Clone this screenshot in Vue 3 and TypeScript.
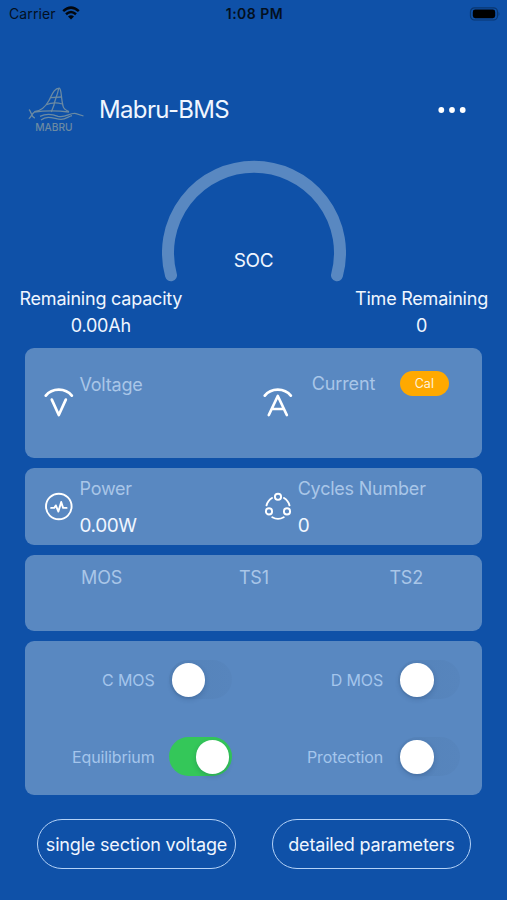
<script setup lang="ts">
import { ref } from 'vue'

interface Toggle {
  label: string
  on: boolean
}

const temperatures: string[] = ['MOS', 'TS1', 'TS2']
const toggles = ref<Toggle[]>([
  { label: 'C MOS', on: false },
  { label: 'D MOS', on: false },
  { label: 'Equilibrium', on: true },
  { label: 'Protection', on: false },
])
</script>

<template>
  <main class="screen">
    <div class="status">
      <div class="carrier">
        <span>Carrier</span>
        <svg class="wifi" width="18" height="14" viewBox="0 0 18 14">
          <path d="M1.2 5.1 Q9 -1.8 16.8 5.1" />
          <path d="M4 8.2 Q9 3.8 14 8.2" />
          <path class="fill" d="M6 10.5 Q9 7.8 12 10.5 L9 13.6 Z" />
        </svg>
      </div>
      <span class="clock">1:08 PM</span>
      <svg class="battery" width="31" height="14" viewBox="0 0 31 14">
        <rect class="shell" x="1.5" y="0.8" width="27" height="12.2" rx="4" />
        <rect x="3.8" y="2.6" width="22.4" height="8.6" rx="2.4" />
        <path class="cap" d="M29.6 4.8 Q31.2 6.9 29.6 9 Z" />
      </svg>
    </div>

    <header class="header">
      <svg class="logo" width="58" height="46" viewBox="0 0 58 46">
        <g class="lines">
          <path d="M6.3 24.7 C14 24 18 19 21 13.5 C24 8 26 1.2 31.3 1.2 C33.6 2 32.8 10 35 19 C35.6 22.4 38 23.4 41 24.6" />
          <path d="M30.7 1.5 C29.5 8 26.5 14 26 18 L23.3 25" />
          <path d="M23 10.6 L33.2 10" />
          <path d="M18.3 17.6 Q26 14.6 34.4 17" />
          <path d="M6.3 25 Q23 22.6 41 25" />
          <path d="M1 22.5 C3.5 24.5 2.6 29 6.8 31.2 M0.8 31.8 C3 30.5 3.5 27 6.5 25" />
          <path d="M12 29.4 C19 26 25 27.4 30 29.3 C38 31.2 42 25.2 48 26.6 L55.5 29" />
          <path d="M13 33 C20 27.5 27 32.4 33 32.4 C38 32.4 40 29.4 44 28.6" />
        </g>
        <text x="7.2" y="44.4" textLength="37.4" lengthAdjust="spacingAndGlyphs">MABRU</text>
      </svg>
      <h1>Mabru-BMS</h1>
      <svg class="more" width="30" height="8" viewBox="0 0 30 8">
        <circle cx="4.3" cy="4" r="2.9" />
        <circle cx="15" cy="4" r="2.9" />
        <circle cx="25.7" cy="4" r="2.9" />
      </svg>
    </header>

    <section class="gauge">
      <svg width="184" height="122" viewBox="0 0 184 122">
        <path d="M9 115.3 A86 86 0 1 1 175 115.3" />
      </svg>
      <span>SOC</span>
    </section>

    <section class="summary">
      <div><span>Remaining capacity</span><span>0.00Ah</span></div>
      <div><span>Time Remaining</span><span>0</span></div>
    </section>

    <section class="card meters">
      <div class="meter">
        <svg width="30" height="32" viewBox="0 0 30 32">
          <path d="M1.8 8.6 C8 .5 21.6 .5 27.8 8.6" />
          <path d="M7.8 12.6 L14.8 28 L21.8 12.6" />
        </svg>
        <span class="label volt">Voltage</span>
      </div>
      <div class="meter">
        <svg width="30" height="32" viewBox="0 0 30 32">
          <path d="M1.8 8.6 C8 .5 21.6 .5 27.8 8.6" />
          <path d="M5.8 28 L14.8 9 L23.8 28 M9.1 22 H20.5" />
        </svg>
        <span class="label current">Current</span>
        <button class="cal">Cal</button>
      </div>
    </section>

    <section class="card stats">
      <div class="stat">
        <svg width="30" height="30" viewBox="0 0 30 30">
          <circle cx="14.8" cy="14.5" r="12.8" />
          <path d="M7.1 15.9 H10.2 L11.8 13.4 L14.4 19.6 L17.2 10 L19.1 15.9 H22.6" />
        </svg>
        <div class="reading"><span class="label">Power</span><span class="value">0.00W</span></div>
      </div>
      <div class="stat">
        <svg width="30" height="30" viewBox="0 0 30 30">
          <circle cx="15" cy="4.8" r="3.1" />
          <circle cx="6" cy="19.4" r="3.1" />
          <circle cx="24" cy="19.4" r="3.1" />
          <path d="M9 6 A12 12 0 0 0 3.5 13.4 M21 6 A12 12 0 0 1 26.5 13.4 M9.3 25.2 Q15 28.5 20.7 25.2" />
        </svg>
        <div class="reading"><span class="label">Cycles Number</span><span class="value">0</span></div>
      </div>
    </section>

    <section class="card temps">
      <span v-for="name in temperatures" :key="name" class="label">{{ name }}</span>
    </section>

    <section class="card switches">
      <div v-for="item in toggles" :key="item.label" class="switch-row">
        <span>{{ item.label }}</span>
        <button class="toggle" :class="{ on: item.on }" role="switch" :aria-checked="item.on" @click="item.on = !item.on">
          <i></i>
        </button>
      </div>
    </section>

    <footer class="actions">
      <button>single section voltage</button>
      <button>detailed parameters</button>
    </footer>
  </main>
</template>

<style>
body {
  margin: 0;
  background: #0f51a8;
}
</style>

<style scoped>
* {
  box-sizing: border-box;
}
button {
  padding: 0;
  border: 0;
  font: inherit;
  color: inherit;
  letter-spacing: inherit;
}
.screen {
  width: 507px;
  height: 900px;
  display: flex;
  flex-direction: column;
  overflow: hidden;
  background: #0f51a8;
  color: #f0f6ff;
  font-family: Inter, 'Liberation Sans', sans-serif;
}
.status {
  height: 28px;
  padding: 0 7px 1px 9px;
  display: grid;
  grid-template-columns: 1fr auto 1fr;
  align-items: center;
  color: #03101f;
  font-size: 14px;
}
.carrier {
  display: flex;
  align-items: center;
  gap: 6px;
  letter-spacing: 0.12px;
}
.wifi {
  margin-top: -1px;
}
.wifi path {
  fill: none;
  stroke: #03070d;
  stroke-width: 2.5;
}
.wifi .fill {
  fill: #03070d;
  stroke: none;
}
.clock {
  font-weight: 600;
  letter-spacing: 0.5px;
}
.battery {
  justify-self: end;
  fill: #000;
}
.battery .shell {
  fill: none;
  stroke: #0a3770;
  stroke-width: 1.2;
}
.battery .cap {
  fill: #0a3770;
}
.header {
  height: 132px;
  padding: 32px 40px 0 28px;
  display: flex;
  align-items: center;
}
.logo .lines {
  fill: none;
  stroke: #6b8aa3;
  stroke-width: 1.3;
}
.logo text {
  fill: #6b8aa3;
  font: 500 11px Inter, sans-serif;
}
h1 {
  margin: -1px 0 0 13px;
  font-size: 24px;
  font-weight: 400;
  letter-spacing: -0.65px;
}
.more {
  margin-left: auto;
  fill: #fff;
}
.gauge {
  height: 125px;
  display: grid;
  justify-items: center;
}
.gauge > * {
  grid-area: 1 / 1;
}
.gauge path {
  fill: none;
  stroke: #5988c1;
  stroke-width: 12;
  stroke-linecap: round;
}
.gauge span {
  margin-top: 88px;
  font-size: 19px;
  line-height: 26px;
  letter-spacing: -0.3px;
}
.summary {
  height: 63px;
  padding: 0 19px 0 19.5px;
  display: flex;
  justify-content: space-between;
  font-size: 18px;
  letter-spacing: -0.22px;
}
.summary div {
  display: flex;
  flex-direction: column;
  align-items: center;
  line-height: 27px;
}
.card {
  width: 457px;
  margin: 0 auto 10px 25.4px;
  border-radius: 9px;
  background: #5988c1;
  flex: none;
}
.label {
  color: #a9c6e8;
  font-size: 18px;
  line-height: 24px;
  letter-spacing: -0.22px;
}
.meters,
.stats {
  display: grid;
  grid-template-columns: 218.2px 1fr;
  padding-left: 19.1px;
}
.meters {
  height: 110px;
  margin-bottom: 9.5px;
}
.meter {
  display: flex;
  align-items: flex-start;
}
.meter svg {
  margin-top: 39px;
  fill: none;
  stroke: #fff;
  stroke-width: 2.7;
  stroke-linecap: round;
  stroke-linejoin: round;
}
.volt {
  margin: 25px 0 0 5px;
}
.current {
  margin: 24px 0 0 19px;
  letter-spacing: -0.1px;
}
.cal {
  width: 49px;
  height: 25px;
  margin: 23px 0 0 24.5px;
  border-radius: 13px;
  background: #ffa900;
  color: #fff3dc;
  font-size: 12.5px;
}
.stats {
  height: 77px;
}
.stat {
  display: flex;
}
.stat svg {
  margin-top: 24px;
  fill: none;
  stroke: #fff;
  stroke-width: 1.9;
  stroke-linecap: round;
  stroke-linejoin: round;
}
.reading {
  margin: 9px 0 0 5px;
  display: flex;
  flex-direction: column;
}
.value {
  margin-top: 12px;
  font-size: 19px;
  line-height: 26px;
  letter-spacing: -0.4px;
}
.temps {
  height: 76.5px;
  padding-top: 11px;
  display: grid;
  grid-template-columns: repeat(3, 1fr);
  text-align: center;
}
.switches {
  height: 154px;
  display: grid;
  grid-template: 1fr 1fr / 228.5px 228.5px;
}
.switch-row {
  display: flex;
  align-items: center;
  justify-content: flex-end;
  gap: 14.8px;
  padding-right: 22px;
  color: #a4c5ec;
  font-size: 16px;
  letter-spacing: -0.12px;
}
.toggle {
  width: 62.5px;
  height: 39px;
  padding: 3px 2.5px;
  display: flex;
  border-radius: 20px;
  background: linear-gradient(90deg, #5583b9, #5785bd);
}
.toggle i {
  width: 33.5px;
  height: 33.5px;
  border-radius: 50%;
  background: #fff;
  box-shadow: 0 2px 5px rgba(20, 40, 80, 0.22);
}
.toggle.on {
  justify-content: flex-end;
  background: #34c759;
}
.actions {
  margin-top: 14px;
  padding-left: 37px;
  display: flex;
  gap: 36px;
}
.actions button {
  width: 199px;
  height: 50px;
  border: 1.5px solid #b4d2f7;
  border-radius: 25px;
  background: transparent;
  font-size: 18px;
  letter-spacing: -0.18px;
  white-space: nowrap;
}
</style>
